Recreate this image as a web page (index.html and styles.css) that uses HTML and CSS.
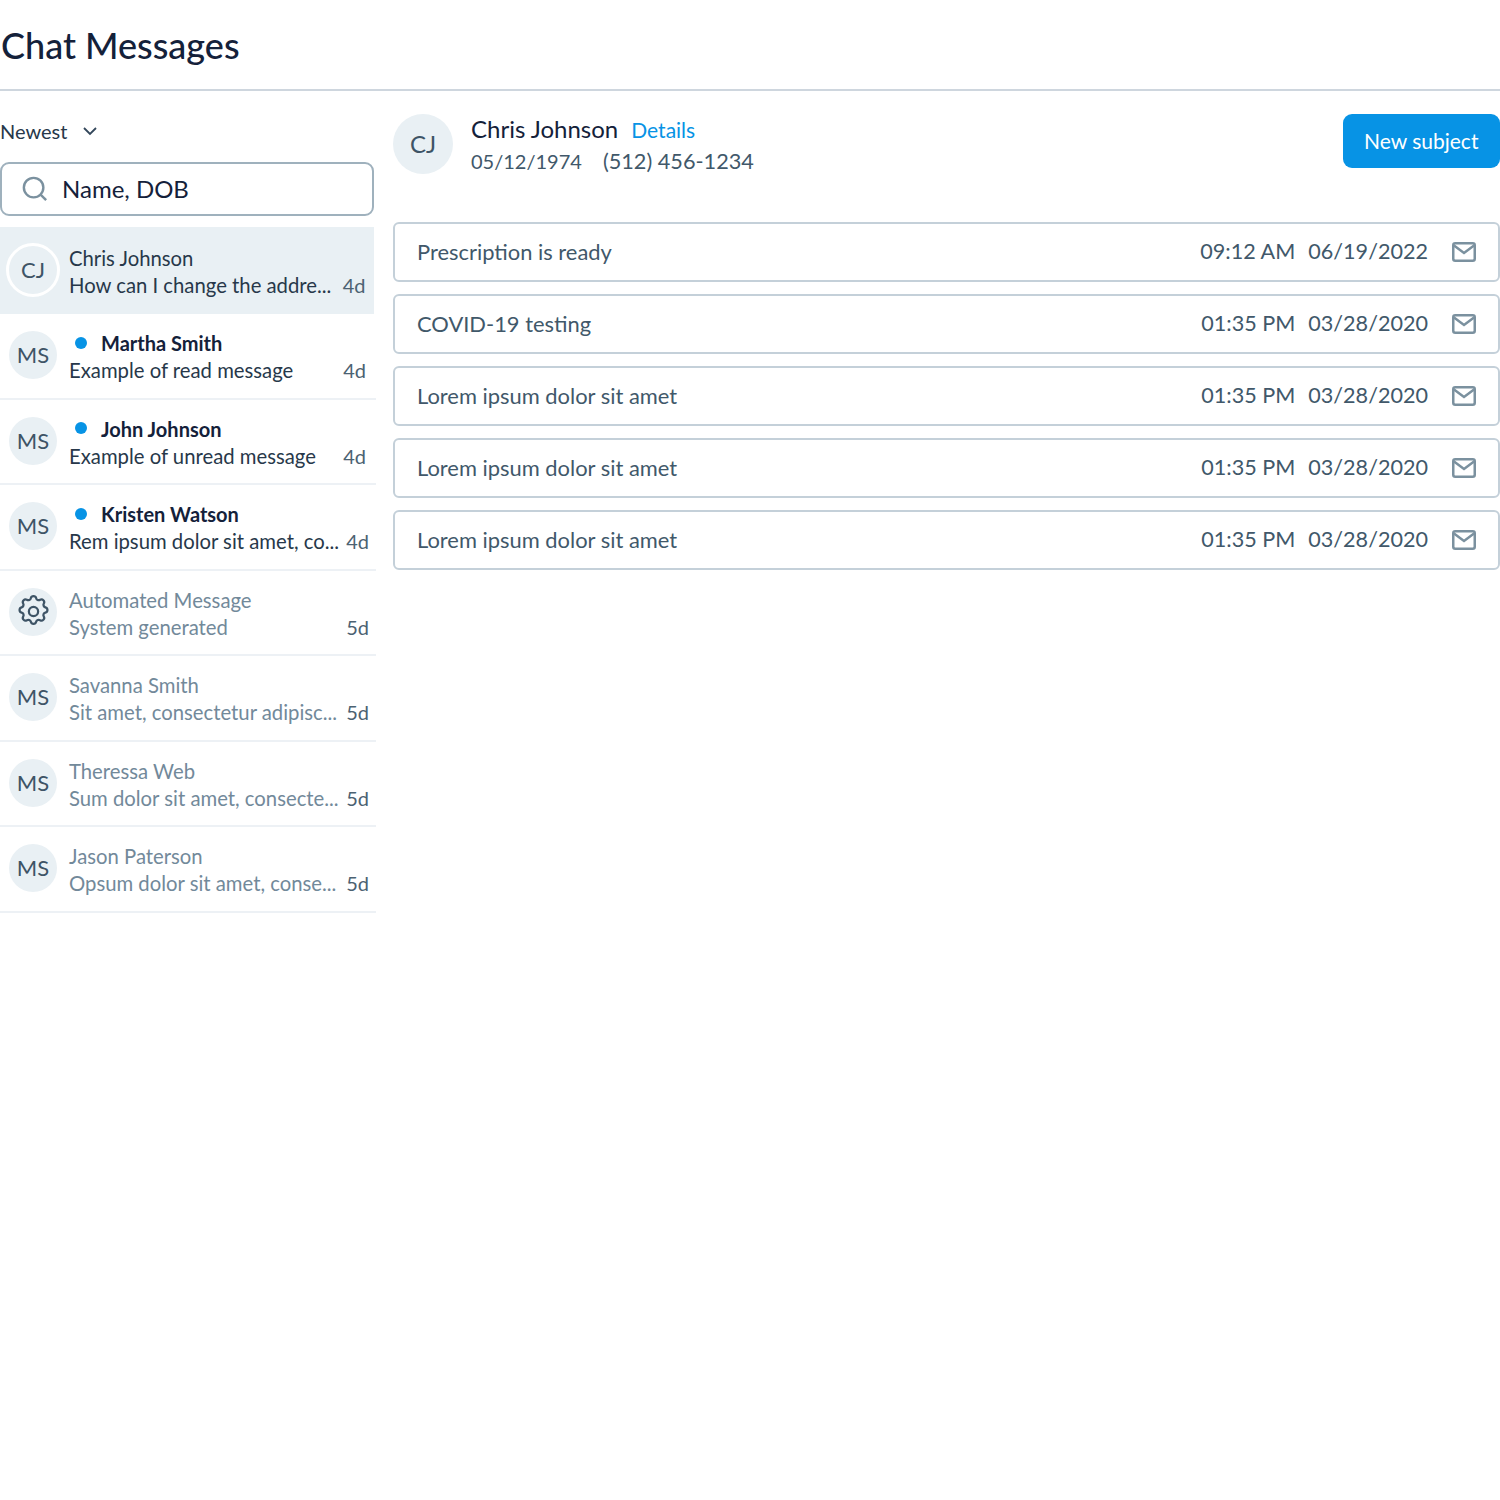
FILE: index.html
```html
<!DOCTYPE html>
<html lang="en">
<head>
<meta charset="utf-8">
<title>Chat Messages</title>
<link rel="stylesheet" href="styles.css">
</head>
<body>
<svg class="defs" width="0" height="0" aria-hidden="true">
  <symbol id="mail" viewBox="0 0 24 20"><rect x="1.25" y="1.25" width="21.5" height="17.5" rx="2" fill="none" stroke="currentColor" stroke-width="2.5"/><path d="M2 3.5l10 7.5 10-7.5" fill="none" stroke="currentColor" stroke-width="2.5"/></symbol>
</svg>
<header class="page-header"><h1 class="title">Chat Messages</h1></header>
<div class="layout">
  <aside class="sidebar">
    <div class="sort">Newest
      <svg class="chev" width="16" height="10" viewBox="0 0 16 10"><path d="M2 2l6 6 6-6" fill="none" stroke="currentColor" stroke-width="1.8"/></svg>
    </div>
    <div class="search">
      <svg class="search-icon" width="26" height="26" viewBox="0 0 28 28"><circle cx="12.5" cy="12.5" r="10.5" fill="none" stroke="currentColor" stroke-width="2.6"/><path d="M20 20l6 6" stroke="currentColor" stroke-width="2.6" fill="none"/></svg>
      <span>Name, DOB</span>
    </div>
    <ul class="list">
      <li class="row selected">
        <div class="avatar ringed">CJ</div>
        <div class="info"><div class="name">Chris Johnson</div><div class="line"><span class="msg dark">How can I change the addre...</span><span class="age near">4d</span></div></div>
      </li>
      <li class="row unread">
        <div class="avatar">MS</div>
        <div class="info"><div class="name"><i class="dot"></i>Martha Smith</div><div class="line"><span class="msg dark">Example of read message</span><span class="age near">4d</span></div></div>
      </li>
      <li class="row unread">
        <div class="avatar">MS</div>
        <div class="info"><div class="name"><i class="dot"></i>John Johnson</div><div class="line"><span class="msg dark">Example of unread message</span><span class="age near">4d</span></div></div>
      </li>
      <li class="row unread">
        <div class="avatar">MS</div>
        <div class="info"><div class="name"><i class="dot"></i>Kristen Watson</div><div class="line"><span class="msg dark">Rem ipsum dolor sit amet, co...</span><span class="age">4d</span></div></div>
      </li>
      <li class="row read">
        <div class="avatar">
          <svg width="37" height="37" viewBox="0 0 24 24" fill="none" stroke="currentColor" stroke-width="1.45" stroke-linejoin="round"><circle cx="12" cy="12" r="3"/><path d="M10.3 3.3c.4-1.7 3-1.7 3.4 0a1.7 1.7 0 0 0 2.6 1.1c1.5-.9 3.3.8 2.4 2.4a1.7 1.7 0 0 0 1 2.5c1.8.5 1.8 3 0 3.4a1.7 1.7 0 0 0-1 2.6c.9 1.5-.9 3.3-2.4 2.4a1.7 1.7 0 0 0-2.6 1c-.4 1.8-3 1.8-3.4 0a1.7 1.7 0 0 0-2.6-1c-1.5.9-3.3-.9-2.4-2.4a1.7 1.7 0 0 0-1-2.6c-1.8-.4-1.8-2.9 0-3.4a1.7 1.7 0 0 0 1-2.5c-.9-1.6.9-3.3 2.4-2.4a1.7 1.7 0 0 0 2.6-1.1z"/></svg>
        </div>
        <div class="info"><div class="name">Automated Message</div><div class="line"><span class="msg">System generated</span><span class="age">5d</span></div></div>
      </li>
      <li class="row read">
        <div class="avatar">MS</div>
        <div class="info"><div class="name">Savanna Smith</div><div class="line"><span class="msg">Sit amet, consectetur adipisc...</span><span class="age">5d</span></div></div>
      </li>
      <li class="row read">
        <div class="avatar">MS</div>
        <div class="info"><div class="name">Theressa Web</div><div class="line"><span class="msg">Sum dolor sit amet, consecte...</span><span class="age">5d</span></div></div>
      </li>
      <li class="row read">
        <div class="avatar">MS</div>
        <div class="info"><div class="name">Jason Paterson</div><div class="line"><span class="msg">Opsum dolor sit amet, conse...</span><span class="age">5d</span></div></div>
      </li>
    </ul>
  </aside>
  <main class="main">
    <div class="patient">
      <div class="avatar big">CJ</div>
      <div class="patient-info">
        <div class="patient-name"><span>Chris Johnson</span><a class="details">Details</a></div>
        <div class="patient-meta"><span>05/12/1974</span><span class="phone">(512) 456-1234</span></div>
      </div>
      <button class="new-subject">New subject</button>
    </div>
    <div class="subjects">
      <div class="subject"><span class="subject-title">Prescription is ready</span><span class="time">09:12 AM</span><span class="date">06/19/2022</span><svg class="mail"><use href="#mail"/></svg></div>
      <div class="subject"><span class="subject-title">COVID-19 testing</span><span class="time">01:35 PM</span><span class="date">03/28/2020</span><svg class="mail"><use href="#mail"/></svg></div>
      <div class="subject"><span class="subject-title">Lorem ipsum dolor sit amet</span><span class="time">01:35 PM</span><span class="date">03/28/2020</span><svg class="mail"><use href="#mail"/></svg></div>
      <div class="subject"><span class="subject-title">Lorem ipsum dolor sit amet</span><span class="time">01:35 PM</span><span class="date">03/28/2020</span><svg class="mail"><use href="#mail"/></svg></div>
      <div class="subject"><span class="subject-title">Lorem ipsum dolor sit amet</span><span class="time">01:35 PM</span><span class="date">03/28/2020</span><svg class="mail"><use href="#mail"/></svg></div>
    </div>
  </main>
</div>
</body>
</html>
```
FILE: styles.css
```css
* { box-sizing: border-box; }
html, body { margin: 0; padding: 0; }
body { font-family: Lato, sans-serif; color: #14213a; background: #fff; height: 1500px; overflow: hidden; }
.defs { position: absolute; }
.page-header { height: 91px; border-bottom: 2px solid #ced6de; padding: 22px 0 0 1px; }
.title { margin: 0; font-size: 36px; line-height: 46px; font-weight: 500; color: #14213a; }
.layout { display: flex; }
.sidebar { width: 376px; flex: none; padding-top: 27px; }
.sort { display: flex; align-items: center; gap: 15px; height: 26px; font-size: 20px; color: #27384a; }
.chev { color: #33475b; }
.search { width: 373.5px; height: 54px; margin-top: 18px; border: 2px solid #9fb1bd; border-radius: 9px; display: flex; align-items: center; gap: 14px; padding: 0 0 2px 20px; font-size: 24px; color: #14213a; }
.search-icon { color: #7b919f; flex: none; margin-top: 2px; }
.list { list-style: none; margin: 11px 0 0; padding: 0; }
.row { display: flex; align-items: center; height: 85.5px; padding-left: 9px; border-bottom: 2px solid #edf1f5; }
.row.selected { width: 373.5px; height: 87px; background: #e9f0f4; border-bottom: 0; padding-left: 6px; gap: 9px; }
.avatar { width: 48px; height: 48px; flex: none; border-radius: 50%; background: #e9f0f4; color: #3e5466; display: flex; align-items: center; justify-content: center; font-size: 22px; margin-top: -1px; padding-bottom: 1px; }
.avatar.ringed { width: 54px; height: 54px; border: 3px solid #fff; margin-top: -1px; }
.avatar.big { width: 60px; height: 60px; font-size: 24px; margin-top: 0; padding-bottom: 2px; }
.info { flex: 1; min-width: 0; margin-left: 12px; padding: 3px 7px 0 0; }
.selected .info { margin-left: 0; padding: 3px 7px 0 0; }
.name { font-size: 20.3px; line-height: 27px; display: flex; align-items: center; color: #27384a; }
.line { font-size: 20.3px; line-height: 27px; display: flex; justify-content: space-between; }
.msg { color: #27384a; white-space: nowrap; }
.age { color: #4c6272; font-size: 20px; }
.age.near { margin-right: 3px; }
.selected .age.near { margin-right: 1px; }
.unread .name { font-weight: 700; color: #14213a; font-size: 20px; }
.dot { width: 12px; height: 12px; border-radius: 50%; background: #0793e5; margin: 0 14px 2px 6px; flex: none; }
.read .name, .read .msg { color: #72899a; }
.main { flex: 1; min-width: 0; padding: 23px 0 0 17px; }
.patient { display: flex; align-items: flex-start; height: 108px; }
.patient-info { flex: 1; margin: -1px 0 0 18px; }
.patient-name { font-size: 24px; line-height: 32px; display: flex; align-items: baseline; gap: 13px; color: #14213a; }
.details { font-size: 21px; color: #0793e5; }
.patient-meta { font-size: 20px; line-height: 31px; display: flex; align-items: baseline; gap: 21px; color: #41586a; }
.phone { font-size: 21.7px; }
.new-subject { width: 157.5px; height: 54px; border: 0; border-radius: 9px; background: #0793e5; color: #fff; font: 21px Lato, sans-serif; padding: 0 0 2px; }
.subjects { display: flex; flex-direction: column; gap: 12px; }
.subject { height: 60px; border: 2px solid #c4d0d9; border-radius: 6px; display: flex; align-items: center; padding: 0 22px 2px 22px; font-size: 21.9px; color: #41586a; }
.subject-title { flex: 1; }
.time, .date { font-size: 21.6px; }
.date { margin-left: 13px; }
.mail { width: 24px; height: 20px; margin: 2px 0 0 24px; color: #7b919f; }
```
